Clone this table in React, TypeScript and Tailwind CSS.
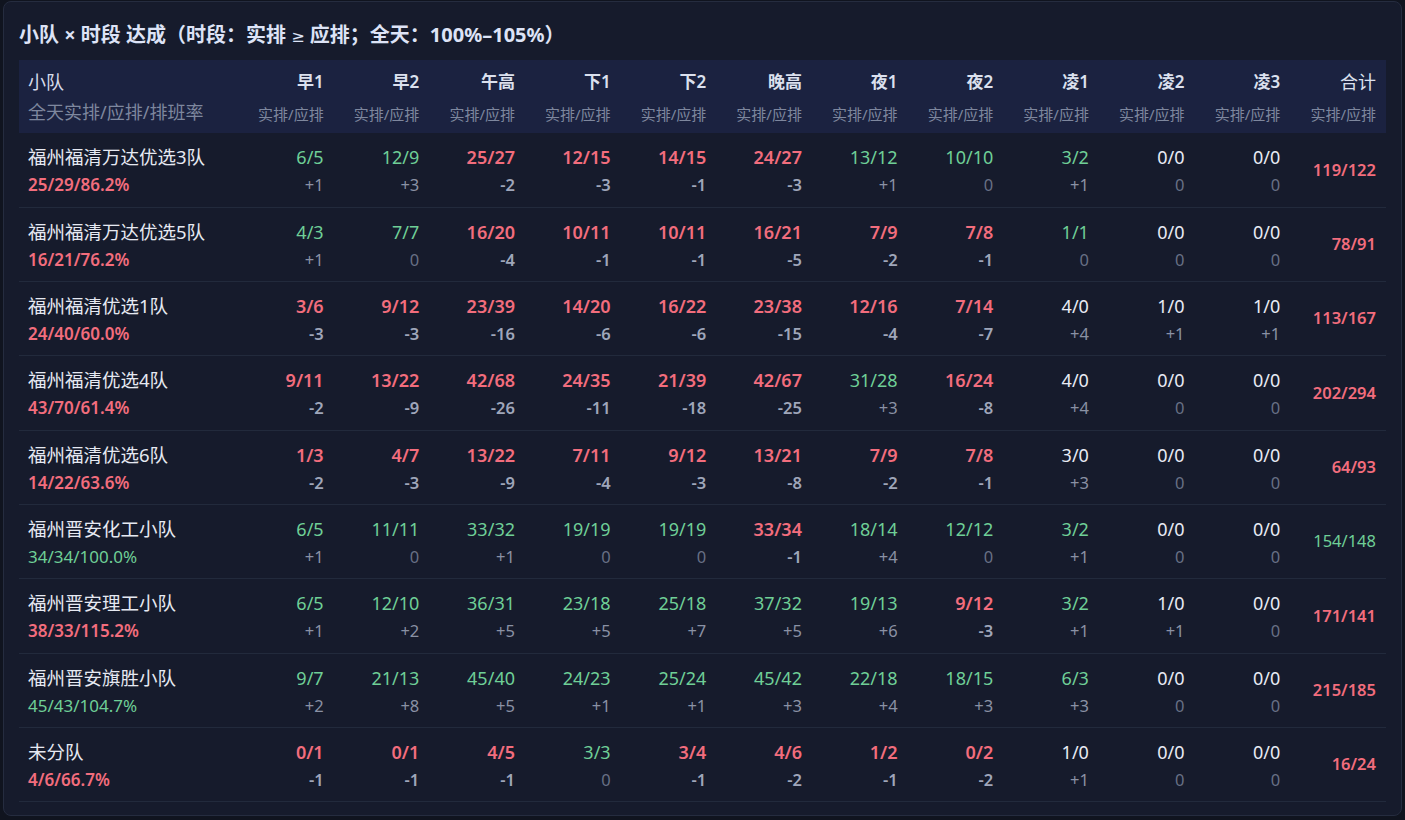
type Cell = [number, number];
type Row = { name: string; cells: Cell[] };

const slots = ["早1", "早2", "午高", "下1", "下2", "晚高", "夜1", "夜2", "凌1", "凌2", "凌3"];

const rows: Row[] = [
  { name: "福州福清万达优选3队", cells: [[6, 5], [12, 9], [25, 27], [12, 15], [14, 15], [24, 27], [13, 12], [10, 10], [3, 2], [0, 0], [0, 0]] },
  { name: "福州福清万达优选5队", cells: [[4, 3], [7, 7], [16, 20], [10, 11], [10, 11], [16, 21], [7, 9], [7, 8], [1, 1], [0, 0], [0, 0]] },
  { name: "福州福清优选1队", cells: [[3, 6], [9, 12], [23, 39], [14, 20], [16, 22], [23, 38], [12, 16], [7, 14], [4, 0], [1, 0], [1, 0]] },
  { name: "福州福清优选4队", cells: [[9, 11], [13, 22], [42, 68], [24, 35], [21, 39], [42, 67], [31, 28], [16, 24], [4, 0], [0, 0], [0, 0]] },
  { name: "福州福清优选6队", cells: [[1, 3], [4, 7], [13, 22], [7, 11], [9, 12], [13, 21], [7, 9], [7, 8], [3, 0], [0, 0], [0, 0]] },
  { name: "福州晋安化工小队", cells: [[6, 5], [11, 11], [33, 32], [19, 19], [19, 19], [33, 34], [18, 14], [12, 12], [3, 2], [0, 0], [0, 0]] },
  { name: "福州晋安理工小队", cells: [[6, 5], [12, 10], [36, 31], [23, 18], [25, 18], [37, 32], [19, 13], [9, 12], [3, 2], [1, 0], [0, 0]] },
  { name: "福州晋安旗胜小队", cells: [[9, 7], [21, 13], [45, 40], [24, 23], [25, 24], [45, 42], [22, 18], [18, 15], [6, 3], [0, 0], [0, 0]] },
  { name: "未分队", cells: [[0, 1], [0, 1], [4, 5], [3, 3], [3, 4], [4, 6], [1, 2], [0, 2], [1, 0], [0, 0], [0, 0]] },
];

// 全天 (实排/应排) and 合计 per row
const dayTotals: Cell[] = [
  [25, 29], [16, 21], [24, 40], [43, 70], [14, 22], [34, 34], [38, 33], [45, 43], [4, 6],
];
const sums: Cell[] = [
  [119, 122], [78, 91], [113, 167], [202, 294], [64, 93], [154, 148], [171, 141], [215, 185], [16, 24],
];

const inRange = ([a, b]: Cell) => b > 0 && a / b >= 1 && a / b <= 1.05;

const valueClass = ([a, b]: Cell) => {
  if (b === 0) return "text-[#e8ebf4]";
  if (a >= b) return "text-[#6fcf97]";
  return "text-[#f26d7d] font-semibold";
};

const deltaClass = (d: number) => {
  if (d < 0) return "text-[#9fa6ba] font-semibold";
  if (d > 0) return "text-[#8a91a4]";
  return "text-[#687085]";
};

const fmtDelta = (d: number) => (d > 0 ? `+${d}` : `${d}`);

export default function App() {
  return (
    <div
      className="min-h-screen bg-[#10141f] px-[3px] pt-[1px]"
      style={{ fontFamily: '"Noto Sans", "Noto Sans CJK SC", sans-serif' }}
    >
      <div className="h-[815px] rounded-lg border border-[#252c3f] bg-[#161b2c] px-[15px] pt-[19px]">
        <h1 className="h-7 overflow-hidden text-[20px] font-bold leading-7 text-[#dde3f6]">
          小队 × 时段 达成（时段：实排{" "}
          <span style={{ fontFamily: '"DejaVu Sans", sans-serif' }} className="text-[16px] font-normal leading-none">
            ≥
          </span>{" "}
          应排；全天：100%–105%）
        </h1>
        <table className="mt-[11px] w-full table-fixed border-collapse">
          <colgroup>
            <col className="w-[219px]" />
            {[...slots, "合计"].map((s) => (
              <col key={s} />
            ))}
          </colgroup>
          <thead>
            <tr className="bg-[#1b2240]">
              <th className="pl-[9px] pt-[10px] pb-[9px] text-left font-normal">
                <div className="text-[18px] leading-6 text-[#d6dbea]">小队</div>
                <div className="mt-[6px] text-[18px] leading-6 text-[#7e879e]">全天实排/应排/排班率</div>
              </th>
              {[...slots, "合计"].map((s) => (
                <th key={s} className="pr-[10px] pt-[10px] pb-[9px] text-right">
                  <div
                    className={`leading-6 text-[#dbe0ee] ${
                      s === "合计" ? "text-[18px] font-normal" : "text-[17px] font-semibold"
                    }`}
                  >
                    {s}
                  </div>
                  <div className="mt-[10px] text-[15px] font-normal leading-5 text-[#7e879e]">实排/应排</div>
                </th>
              ))}
            </tr>
          </thead>
          <tbody>
            {rows.map((r, i) => {
              const day = dayTotals[i];
              const sum = sums[i];
              return (
                <tr key={r.name} className="h-[74.3px] border-b border-[#222a3c]">
                  <td className="pl-[9px] pt-3 pb-[10px] align-top">
                    <div className="text-[18.5px] leading-6 text-[#e6e9f2]">{r.name}</div>
                    <div
                      className={`mt-[5px] text-[17px] leading-[22px] ${
                        inRange(day) ? "text-[#6fcf97]" : "font-semibold text-[#f26d7d]"
                      }`}
                    >
                      {day[0]}/{day[1]}/{((day[0] / day[1]) * 100).toFixed(1)}%
                    </div>
                  </td>
                  {r.cells.map((c, j) => (
                    <td key={j} className="pr-[10px] pt-3 pb-[10px] text-right align-top">
                      <div className={`text-[18px] leading-6 ${valueClass(c)}`}>
                        {c[0]}/{c[1]}
                      </div>
                      <div className={`mt-[5px] text-[16.5px] leading-[22px] ${deltaClass(c[0] - c[1])}`}>
                        {fmtDelta(c[0] - c[1])}
                      </div>
                    </td>
                  ))}
                  <td className="pr-[10px] text-right align-middle">
                    <span
                      className={`text-[16.5px] ${
                        inRange(sum) ? "text-[#6fcf97]" : "font-semibold text-[#f26d7d]"
                      }`}
                    >
                      {sum[0]}/{sum[1]}
                    </span>
                  </td>
                </tr>
              );
            })}
          </tbody>
        </table>
      </div>
    </div>
  );
}
